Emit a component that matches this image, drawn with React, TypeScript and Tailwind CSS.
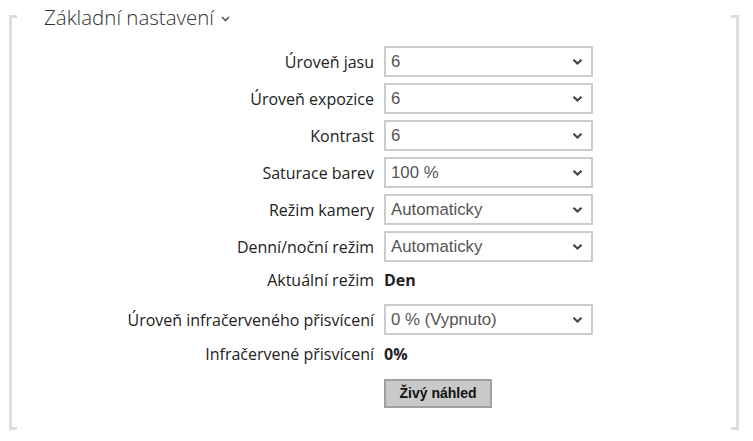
import React from "react";

const Chevron = () => (
  <svg width="11" height="8" viewBox="0 0 11 8" className="shrink-0">
    <path d="M1.5 1.8 L5.5 5.6 L9.5 1.8" fill="none" stroke="#444" strokeWidth="2.2" />
  </svg>
);

const Select = ({ value }: { value: string }) => (
  <div className="flex h-[31px] w-[209px] items-center justify-between border-2 border-[#cccccc] bg-white pl-[5px] pr-[8px] text-[16.8px] text-[#555] [font-family:'Liberation_Sans',Arial,sans-serif]">
    <span>{value}</span>
    <Chevron />
  </div>
);

const Label = ({ children }: { children: React.ReactNode }) => (
  <div className="w-[372px] shrink-0 pr-[10px] text-right text-[16px] text-[#222]">{children}</div>
);

export default function App() {
  const selects: [string, string][] = [
    ["Úroveň jasu", "6"],
    ["Úroveň expozice", "6"],
    ["Kontrast", "6"],
    ["Saturace barev", "100 %"],
    ["Režim kamery", "Automaticky"],
    ["Denní/noční režim", "Automaticky"],
  ];
  return (
    <div className="h-[441px] w-[753px] bg-white pt-[15px] [font-family:'Open_Sans','Noto_Sans',sans-serif]">
      <div className="relative ml-[9px] h-[415px] w-[730px] border-x-[3px] border-[#dddddd] pt-[31px]">
        <div className="absolute left-0 top-0 h-[3px] w-[5px] bg-[#dddddd]" />
        <div className="absolute bottom-0 left-0 h-[3px] w-[5px] bg-[#dddddd]" />
        <div className="absolute right-0 top-0 h-[3px] w-[5px] bg-[#dddddd]" />
        <div className="absolute bottom-0 right-0 h-[3px] w-[5px] bg-[#dddddd]" />
        <div className="absolute left-[32px] top-[-12px] flex items-start gap-[7px] bg-white">
          <span className="text-[20.5px] font-light leading-[28px] text-[#333]">Základní nastavení</span>
          <svg width="9" height="6" viewBox="0 0 9 6" className="mt-[13px]">
            <path d="M1 1 L4.5 4.5 L8 1" fill="none" stroke="#555" strokeWidth="1.6" />
          </svg>
        </div>
        <div className="flex flex-col">
          <div className="flex flex-col gap-[6px]">
            {selects.map(([l, v]) => (
              <div key={l} className="flex items-center">
                <Label>{l}</Label>
                <Select value={v} />
              </div>
            ))}
          </div>
          <div className="mt-[7px] flex h-[22px] items-center">
            <Label>Aktuální režim</Label>
            <span className="text-[16px] font-bold text-[#222]">Den</span>
          </div>
          <div className="mt-[13px] flex items-center">
            <Label>Úroveň infračerveného přisvícení</Label>
            <Select value="0 % (Vypnuto)" />
          </div>
          <div className="mt-[8px] flex h-[22px] items-center">
            <Label>Infračervené přisvícení</Label>
            <span className="text-[16px] font-bold text-[#222]">0%</span>
          </div>
          <div className="mt-[14px] flex">
            <div className="w-[372px] shrink-0" />
            <button className="h-[29px] w-[108px] border-2 border-[#a0a0a0] bg-[#c9c9c9] text-[14px] font-bold text-[#111] [font-family:'Liberation_Sans',Arial,sans-serif]">
              Živý náhled
            </button>
          </div>
        </div>
      </div>
    </div>
  );
}
